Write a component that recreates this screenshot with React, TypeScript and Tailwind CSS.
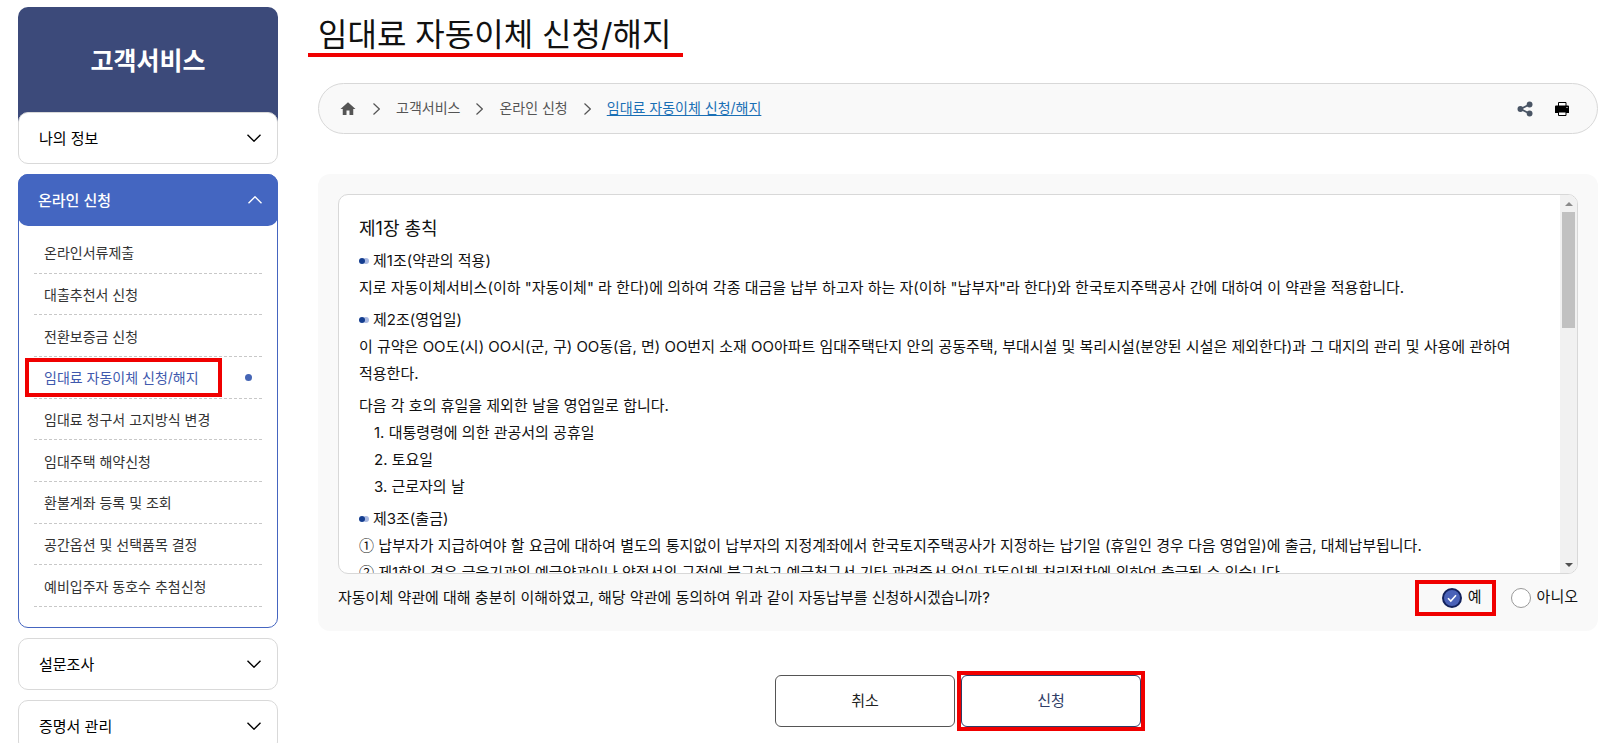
import { useState } from 'react'
import { MdHome } from 'react-icons/md'

const subMenus = [
  '온라인서류제출',
  '대출추천서 신청',
  '전환보증금 신청',
  '임대료 자동이체 신청/해지',
  '임대료 청구서 고지방식 변경',
  '임대주택 해약신청',
  '환불계좌 등록 및 조회',
  '공간옵션 및 선택품목 결정',
  '예비입주자 동호수 추첨신청',
]

const current = '임대료 자동이체 신청/해지'

const answers = [
  { value: 'yes', label: '예', marked: true },
  { value: 'no', label: '아니오', marked: false },
]

function Chevron({ className }: { className?: string }) {
  return (
    <svg viewBox="0 0 14 8" className={`h-2 w-3.5 ${className ?? ''}`} fill="none" stroke="currentColor" strokeWidth="1.4" aria-hidden="true">
      <path d="M0.5 0.8 7 7.2 13.5 0.8" />
    </svg>
  )
}

function Separator() {
  return (
    <svg viewBox="0 0 7 12" className="h-3 w-[7px] text-[#555]" fill="none" stroke="currentColor" strokeWidth="1.2" aria-hidden="true">
      <path d="M0.5 0.5 6.3 6 0.5 11.5" />
    </svg>
  )
}

function ShareIcon() {
  return (
    <svg viewBox="0 0 16 16" className="h-4 w-4 fill-[#4a5565] stroke-[#4a5565]" aria-hidden="true">
      <path d="M12.500 3.500 3.500 8l9 4.500" fill="none" strokeWidth="1.6" />
      <g stroke="none">
        <circle cx="12.600" cy="3.500" r="2.900" />
        <circle cx="3.400" cy="8" r="2.900" />
        <circle cx="12.600" cy="12.500" r="2.900" />
      </g>
    </svg>
  )
}

function PrintIcon() {
  return (
    <svg viewBox="0 0 14 14" className="h-3.5 w-3.5" aria-hidden="true">
      <path d="M3.500 .5h7.500v4H3.500z" fill="#fff" stroke="#000" />
      <path d="M1 3.500h12a1 1 0 0 1 1 1V11H0V4.500a1 1 0 0 1 1-1Z" />
      <path d="M3.500 10h7.500v3.500H3.500z" fill="#fff" stroke="#000" />
      <path d="M11.500 5h1v1h-1z" fill="#fff" />
    </svg>
  )
}

function MenuItem({ label }: { label: string }) {
  return (
    <button
      type="button"
      className="flex h-[52px] w-full items-center justify-between rounded-[10px] border border-[#d9d9d9] bg-white pr-4 pl-5 text-[15px] text-[#000]"
    >
      <span className="pt-0.5">{label}</span>
      <Chevron />
    </button>
  )
}

function Clause({ title }: { title: string }) {
  return (
    <h3 className="mt-[5px] flex items-center gap-1">
      <svg viewBox="0 0 10 6" className="h-1.5 w-2.5" aria-hidden="true">
        <circle cx="7" cy="3" r="3" fill="#a9b9e2" />
        <circle cx="3" cy="3" r="3" fill="#153e90" />
      </svg>
      {title}
    </h3>
  )
}

// Inter의 원문자는 너무 커서 본문 글꼴로 표시
function Circled({ children }: { children: string }) {
  return <span className="font-['Noto_Sans_CJK_KR',sans-serif] leading-none">{children}</span>
}

export default function App() {
  const [agree, setAgree] = useState('yes')

  return (
    <div className="flex items-start gap-10 bg-white pt-[7px] pr-1.5 pl-[18px] font-[Inter,'Noto_Sans_CJK_KR',sans-serif] text-[15px] break-keep text-[#111]">
      {/* 좌측 메뉴 */}
      <aside className="w-[260px] shrink-0">
        <h2 className="flex h-[117px] items-center justify-center rounded-t-[10px] bg-[#3c4a7a] pb-2 text-[25px] font-bold text-white">
          고객서비스
        </h2>
        <nav className="-mt-3 flex flex-col gap-2.5">
          <MenuItem label="나의 정보" />

          <div className="rounded-[10px] border border-[#4565c0] bg-white">
            <button
              type="button"
              className="-m-px flex h-[52px] w-[260px] items-center justify-between rounded-[10px] bg-[#4466c1] pr-4 pl-5 font-medium text-white"
            >
              <span className="pt-0.5">온라인 신청</span>
              <Chevron className="rotate-180" />
            </button>
            <ul className="mx-[15px] mt-[7px] mb-5 grid h-[375px] auto-rows-fr text-sm text-[#333]">
              {subMenus.map((menu) => (
                <li key={menu} className="border-b border-dashed border-[#c8c8c8]">
                  {menu === current ? (
                    <a href="#" aria-current="page" className="relative flex h-full items-center justify-between px-2.5 text-[#4059ad]">
                      <span className="pt-0.5">{menu}</span>
                      <span className="h-[7px] w-[7px] rounded-full bg-[#4565b5]" />
                      <span className="pointer-events-none absolute -left-[9px] h-[39px] w-[197px] border-4 border-[#f00000]" />
                    </a>
                  ) : (
                    <a href="#" className="flex h-full items-center px-2.5 pt-0.5">{menu}</a>
                  )}
                </li>
              ))}
            </ul>
          </div>

          <MenuItem label="설문조사" />
          <MenuItem label="증명서 관리" />
        </nav>
      </aside>

      {/* 본문 */}
      <main className="min-w-0 flex-1">
        <h1 className="relative flex h-14 items-center text-[32px]">
          {current}
          <span className="pointer-events-none absolute bottom-1.5 -left-[10px] h-1 w-[375px] bg-[#f00000]" />
        </h1>

        <div className="mt-5 flex h-[51px] items-center justify-between rounded-full border border-[#d8d8d8] bg-[#f9f9f9] pr-7 pl-5 text-sm text-[#555]">
          <nav aria-label="현재 위치" className="flex items-center gap-4">
            <a href="#" aria-label="홈"><MdHome className="h-[18px] w-[18px]" /></a>
            <Separator />
            <a href="#" className="pb-0.5">고객서비스</a>
            <Separator />
            <a href="#" className="pb-0.5">온라인 신청</a>
            <Separator />
            <a href="#" aria-current="page" className="pb-0.5 text-[#1a6fb5] underline underline-offset-2">{current}</a>
          </nav>
          <div className="flex items-center gap-[22px]">
            <button type="button" aria-label="공유"><ShareIcon /></button>
            <button type="button" aria-label="인쇄"><PrintIcon /></button>
          </div>
        </div>

        <form className="mt-10" onSubmit={(e) => e.preventDefault()}>
          <div className="rounded-xl bg-[#f9f9f9] p-5">
            <div className="flex h-[380px] overflow-hidden rounded-[10px] border border-[#d8d8d8] bg-white">
              <div className="flex-1 overflow-y-auto p-5 leading-[27px] [scrollbar-width:none]">
                <h2 className="text-lg leading-[27px]">제1장 총칙</h2>
                <Clause title="제1조(약관의 적용)" />
                <p>지로 자동이체서비스(이하 "자동이체" 라 한다)에 의하여 각종 대금을 납부 하고자 하는 자(이하 "납부자"라 한다)와 한국토지주택공사 간에 대하여 이 약관을 적용합니다.</p>
                <Clause title="제2조(영업일)" />
                <p>이 규약은 OO도(시) OO시(군, 구) OO동(읍, 면) OO번지 소재 OO아파트 임대주택단지 안의 공동주택, 부대시설 및 복리시설(분양된 시설은 제외한다)과 그 대지의 관리 및 사용에 관하여 적용한다.</p>
                <p className="mt-[5px]">다음 각 호의 휴일을 제외한 날을 영업일로 합니다.</p>
                <ol className="pl-[15px]">
                  <li>1. 대통령령에 의한 관공서의 공휴일</li>
                  <li>2. 토요일</li>
                  <li>3. 근로자의 날</li>
                </ol>
                <Clause title="제3조(출금)" />
                <p><Circled>①</Circled> 납부자가 지급하여야 할 요금에 대하여 별도의 통지없이 납부자의 지정계좌에서 한국토지주택공사가 지정하는 납기일 (휴일인 경우 다음 영업일)에 출금, 대체납부됩니다.</p>
                <p><Circled>②</Circled> 제1항의 경우 금융기관의 예금약관이나 약정서의 규정에 불구하고 예금청구서 기타 관련증서 없이 자동이체 처리절차에 의하여 출금될 수 있습니다.</p>
              </div>
              <div className="flex w-[17px] flex-col items-center bg-[#f1f1f1]" aria-hidden="true">
                <span className="flex h-[17px] items-center">
                  <svg viewBox="0 0 8 4" className="h-1 w-2 fill-[#8a8a8a]"><path d="M0 4 4 0l4 4z" /></svg>
                </span>
                <span className="h-[116px] w-[13px] bg-[#c1c1c1]" />
                <span className="mt-auto flex h-[17px] items-center">
                  <svg viewBox="0 0 8 4" className="h-1 w-2 fill-[#505050]"><path d="M0 0l4 4 4-4z" /></svg>
                </span>
              </div>
            </div>

            <fieldset className="mt-2.5 flex items-center justify-between">
              <legend className="sr-only">약관 동의</legend>
              <p className="leading-[27px]">자동이체 약관에 대해 충분히 이해하였고, 해당 약관에 동의하여 위과 같이 자동납부를 신청하시겠습니까?</p>
              <div className="flex items-center gap-[29px]">
                {answers.map(({ value, label, marked }) => (
                  <label key={value} className="relative flex items-center gap-1.5">
                    <input
                      type="radio"
                      name="agree"
                      value={value}
                      checked={agree === value}
                      onChange={() => setAgree(value)}
                      className="peer h-5 w-5 appearance-none rounded-full border border-[#999] bg-white checked:border-2 checked:border-[#12215c] checked:bg-[#4a62b8]"
                    />
                    <svg viewBox="0 0 20 20" className="pointer-events-none absolute left-0 hidden h-5 w-5 peer-checked:block" fill="none" stroke="#fff" strokeWidth="1.6" aria-hidden="true">
                      <path d="M6 10.200 8.800 13 14 7.300" />
                    </svg>
                    {label}
                    {marked && <span className="pointer-events-none absolute -right-[14px] h-9 w-[81px] border-4 border-[#f00000]" />}
                  </label>
                ))}
              </div>
            </fieldset>
          </div>

          <div className="mt-11 flex justify-center gap-1.5">
            <button type="button" className="h-[52px] w-[180px] rounded-md border border-[#555] bg-white text-[#222]">
              취소
            </button>
            <button type="submit" className="relative h-[52px] w-[180px] rounded-md border border-[#2f3d66] bg-white text-[#2f3d66]">
              신청
              <span className="pointer-events-none absolute -inset-[5px] border-4 border-[#f00000]" />
            </button>
          </div>
        </form>
      </main>
    </div>
  )
}
